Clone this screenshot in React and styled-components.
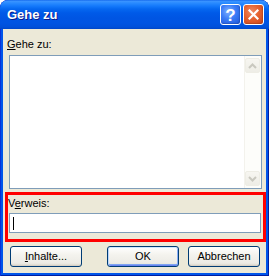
import React from "react";
import styled, { createGlobalStyle } from "styled-components";

const Global = createGlobalStyle`
  html, body { margin: 0; padding: 0; background: #ffffff; }
  body { font-family: "Liberation Sans", Arial, sans-serif; }
`;

const Window = styled.div`
  width: 269px;
  height: 276px;
  box-sizing: border-box;
  display: flex;
  flex-direction: column;
  border-radius: 8px 8px 0 0;
  background: #0055ea;
  box-shadow: inset 1px 0 #0831d9, inset -1px 0 #001ea0, inset 0 -1px #001ea0;
  overflow: hidden;
`;

const TitleBar = styled.div`
  height: 29px;
  flex: none;
  display: flex;
  align-items: center;
  padding: 0 5px 0 7px;
  box-sizing: border-box;
  background: linear-gradient(
    to bottom,
    #0a5ee8 0px,
    #3d95ff 1px,
    #2a8bff 3px,
    #1479fb 6px,
    #0567f0 9px,
    #005ae8 13px,
    #0055e3 18px,
    #0054e2 23px,
    #0050da 27px,
    #0046c8 29px
  );
  border-radius: 8px 8px 0 0;
`;

const Title = styled.div`
  flex: 1;
  color: #ffffff;
  font-family: "Liberation Sans", Arial, sans-serif;
  font-weight: bold;
  font-size: 13px;
  line-height: 16px;
  text-shadow: 1px 1px 0 #0c1a8a;
  padding-top: 1px;
`;

const CaptionButton = styled.div`
  width: 21px;
  height: 21px;
  box-sizing: border-box;
  border: 1px solid #ffffff;
  border-radius: 3px;
  margin-left: 2px;
  display: flex;
  align-items: center;
  justify-content: center;
  color: #ffffff;
  background: ${(p) =>
    p.$kind === "close"
      ? "radial-gradient(circle at 40% 35%, #f08a63 0%, #e5622f 45%, #c8431a 100%)"
      : "radial-gradient(circle at 40% 35%, #7eb0ff 0%, #3b7cf6 45%, #1d55d8 100%)"};
  box-shadow: inset -1px -1px 1px rgba(0, 0, 0, 0.15);
`;

const HelpGlyph = styled.span`
  font-family: "Liberation Sans", Arial, sans-serif;
  font-weight: bold;
  font-size: 17px;
  line-height: 17px;
  margin-top: 1px;
`;

const Client = styled.div`
  flex: 1;
  margin: 0 3px 3px 3px;
  background: #ece9d8;
  display: flex;
  flex-direction: column;
  font-family: "Liberation Sans", Arial, sans-serif;
  font-size: 11px;
  color: #000000;
`;

const Label = styled.div`
  height: 13px;
  line-height: 13px;
  margin: ${(p) => p.$margin};
  u { text-decoration: underline; text-underline-offset: 1px; }
`;

const ListBox = styled.div`
  margin: 4px 0 0 6px;
  width: 253px;
  height: 134px;
  box-sizing: border-box;
  border: 1px solid #7f9db9;
  background: #ffffff;
  display: flex;
  justify-content: flex-end;
`;

const ScrollTrack = styled.div`
  width: 17px;
  display: flex;
  flex-direction: column;
  justify-content: space-between;
  padding: 2px 1px 2px 0;
  box-sizing: border-box;
  background: #fdfdfa;
  border-left: 1px solid #f3f2ec;
`;

const ScrollButton = styled.div`
  width: 15px;
  height: 15px;
  box-sizing: border-box;
  border: 1px solid #eeede5;
  border-radius: 2px;
  background: linear-gradient(to bottom, #f7f6f1, #eeede6);
  display: flex;
  align-items: center;
  justify-content: center;
`;

const Highlight = styled.div`
  margin: 3px 0 0 2px;
  width: 261px;
  height: 50px;
  box-sizing: border-box;
  border: 3px solid #ff0000;
  display: flex;
  flex-direction: column;
`;

const Input = styled.div`
  margin: 3px 0 0 1px;
  width: 252px;
  height: 20px;
  box-sizing: border-box;
  border: 1px solid #7f9db9;
  background: #ffffff;
  display: flex;
  align-items: center;
  padding-left: 3px;
`;

const Caret = styled.div`
  width: 1px;
  height: 13px;
  background: #000000;
`;

const ButtonRow = styled.div`
  margin: 4px 0 0 7px;
  display: flex;
  height: 21px;
`;

const Button = styled.div`
  width: 72px;
  height: 21px;
  box-sizing: border-box;
  margin-left: ${(p) => p.$gap || 0}px;
  border: 1px solid #003c74;
  border-radius: 3px;
  display: flex;
  align-items: center;
  justify-content: center;
  background: linear-gradient(to bottom, #ffffff 0%, #f4f3ee 40%, #ecebe5 85%, #d8d3c6 100%);
  box-shadow: ${(p) =>
    p.$default
      ? "inset 0 1px #cee7ff, inset 1px 0 #b8d5fd, inset -1px 0 #89adf4, inset 0 -1px #6982ee, inset 0 -2px #7ea4f1"
      : "inset 0 -1px #d6d0c5"};
  line-height: 13px;
  u { text-decoration: underline; text-underline-offset: 1px; }
`;

const ChevronUp = () => (
  <svg width="9" height="6" viewBox="0 0 9 6">
    <path d="M1 5 L4.5 1.5 L8 5" fill="none" stroke="#c9c8bf" strokeWidth="2" />
  </svg>
);

const ChevronDown = () => (
  <svg width="9" height="6" viewBox="0 0 9 6">
    <path d="M1 1 L4.5 4.5 L8 1" fill="none" stroke="#c9c8bf" strokeWidth="2" />
  </svg>
);

const CloseX = () => (
  <svg width="11" height="11" viewBox="0 0 11 11">
    <path d="M1.5 1.5 L9.5 9.5 M9.5 1.5 L1.5 9.5" stroke="#ffffff" strokeWidth="2.2" strokeLinecap="square" />
  </svg>
);

export default function App() {
  return (
    <>
      <Global />
      <Window>
        <TitleBar>
          <Title>Gehe zu</Title>
          <CaptionButton $kind="help">
            <HelpGlyph>?</HelpGlyph>
          </CaptionButton>
          <CaptionButton $kind="close">
            <CloseX />
          </CaptionButton>
        </TitleBar>
        <Client>
          <Label $margin="9px 0 0 4px">
            <u>G</u>ehe zu:
          </Label>
          <ListBox>
            <ScrollTrack>
              <ScrollButton>
                <ChevronUp />
              </ScrollButton>
              <ScrollButton>
                <ChevronDown />
              </ScrollButton>
            </ScrollTrack>
          </ListBox>
          <Highlight>
            <Label $margin="2px 0 0 0">
              V<u>e</u>rweis:
            </Label>
            <Input>
              <Caret />
            </Input>
          </Highlight>
          <ButtonRow>
            <Button>
              <span>
                <u>I</u>nhalte...
              </span>
            </Button>
            <Button $gap={25} $default>
              OK
            </Button>
            <Button $gap={9}>Abbrechen</Button>
          </ButtonRow>
        </Client>
      </Window>
    </>
  );
}
